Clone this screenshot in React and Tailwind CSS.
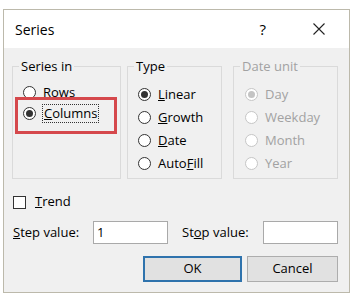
import React from 'react';

const font = { fontFamily: '"Open Sans", "Noto Sans", sans-serif' };

function Radio({ checked, disabled }) {
  return (
    <span
      className={`flex h-[13px] w-[13px] shrink-0 items-center justify-center rounded-full border bg-white ${
        disabled ? 'border-[#c6c6c6]' : 'border-[#333333]'
      }`}
    >
      {checked && (
        <span
          className={`h-[7px] w-[7px] rounded-full ${disabled ? 'bg-[#c4c4c4]' : 'bg-[#333333]'}`}
        />
      )}
    </span>
  );
}

function Option({ children, checked, disabled, h = 'h-[23px]', gap = 'gap-[7px]' }) {
  return (
    <div className={`flex items-center ${h} ${gap}`}>
      <Radio checked={checked} disabled={disabled} />
      <span className={disabled ? 'text-[#a2a2a2]' : 'text-black'}>{children}</span>
    </div>
  );
}

function Group({ label, className, disabled, children }) {
  return (
    <fieldset className={`h-[122px] border border-[#dadada] p-0 ${className}`}>
      <legend className={`ml-[6px] px-[2px] leading-[18px] ${disabled ? 'text-[#a2a2a2]' : 'text-black'}`}>
        {label}
      </legend>
      {children}
    </fieldset>
  );
}

export default function App() {
  return (
    <div className="h-[302px] w-[355px] bg-white pl-[3px] pt-[9px] text-[13px]" style={font}>
      <div className="flex h-[284px] w-[347px] flex-col border border-[#bcb9ab] bg-[#f0f0f0]">
        {/* title bar */}
        <div className="flex h-[38px] items-center bg-white pl-[11px] text-[14px] text-black">
          <span>Series</span>
          <span className="ml-auto text-[15px]">?</span>
          <svg className="ml-[47px] mr-[24px]" width="12" height="12" viewBox="0 0 12 12">
            <path d="M0.5 0.5 L11.5 11.5 M11.5 0.5 L0.5 11.5" stroke="#222" strokeWidth="1.1" fill="none" />
          </svg>
        </div>

        {/* groups */}
        <div className="mt-[9px] flex pl-[8px]">
          <Group label="Series in" className="w-[109px]">
            <div className="relative pl-[10px] pt-[7px]">
              <Option h="h-[21px]">
                <u>R</u>ows
              </Option>
              <div className="flex h-[21px] items-center gap-[6px]">
                <Radio checked />
                <span className="border border-dotted border-[#333333] px-[1px] leading-[17px]">
                  <u>C</u>olumns
                </span>
              </div>
              {/* highlight */}
              <div className="absolute left-[2px] top-[22px] h-[37px] w-[102px] border-[3px] border-[#d5484c]" />
            </div>
          </Group>

          <Group label="Type" className="ml-[6px] w-[95px]">
            <div className="pl-[10px] pt-[8px]">
              <Option checked>
                <u>L</u>inear
              </Option>
              <Option>
                <u>G</u>rowth
              </Option>
              <Option>
                <u>D</u>ate
              </Option>
              <Option>
                Auto<u>F</u>ill
              </Option>
            </div>
          </Group>

          <Group label="Date unit" className="ml-[11px] w-[105px]" disabled>
            <div className="pl-[11px] pt-[8px]">
              <Option checked disabled>Day</Option>
              <Option disabled>Weekday</Option>
              <Option disabled>Month</Option>
              <Option disabled>Year</Option>
            </div>
          </Group>
        </div>

        {/* trend */}
        <div className="mt-[13px] flex h-[20px] items-center gap-[9px] pl-[9px]">
          <span className="h-[13px] w-[13px] border border-[#333333] bg-white" />
          <span>
            <u>T</u>rend
          </span>
        </div>

        {/* step / stop */}
        <div className="mt-[9px] flex h-[23px] items-center pl-[9px]">
          <span className="w-[80px]">
            <u>S</u>tep value:
          </span>
          <div className="flex h-[23px] w-[75px] items-center border border-[#a9a9a9] bg-white pl-[3px]">1</div>
          <span className="ml-[14px] w-[81px]">
            St<u>o</u>p value:
          </span>
          <div className="h-[23px] w-[75px] border border-[#a9a9a9] bg-white" />
        </div>

        {/* buttons */}
        <div className="mt-[12px] flex pl-[139px]">
          <button className="flex h-[26px] w-[99px] items-center justify-center border-2 border-[#2f73ad] bg-[#e1e1e1] text-black">
            OK
          </button>
          <button className="ml-[5px] flex h-[26px] w-[91px] items-center justify-center border border-[#adadad] bg-[#e1e1e1] text-black">
            Cancel
          </button>
        </div>
      </div>
    </div>
  );
}
